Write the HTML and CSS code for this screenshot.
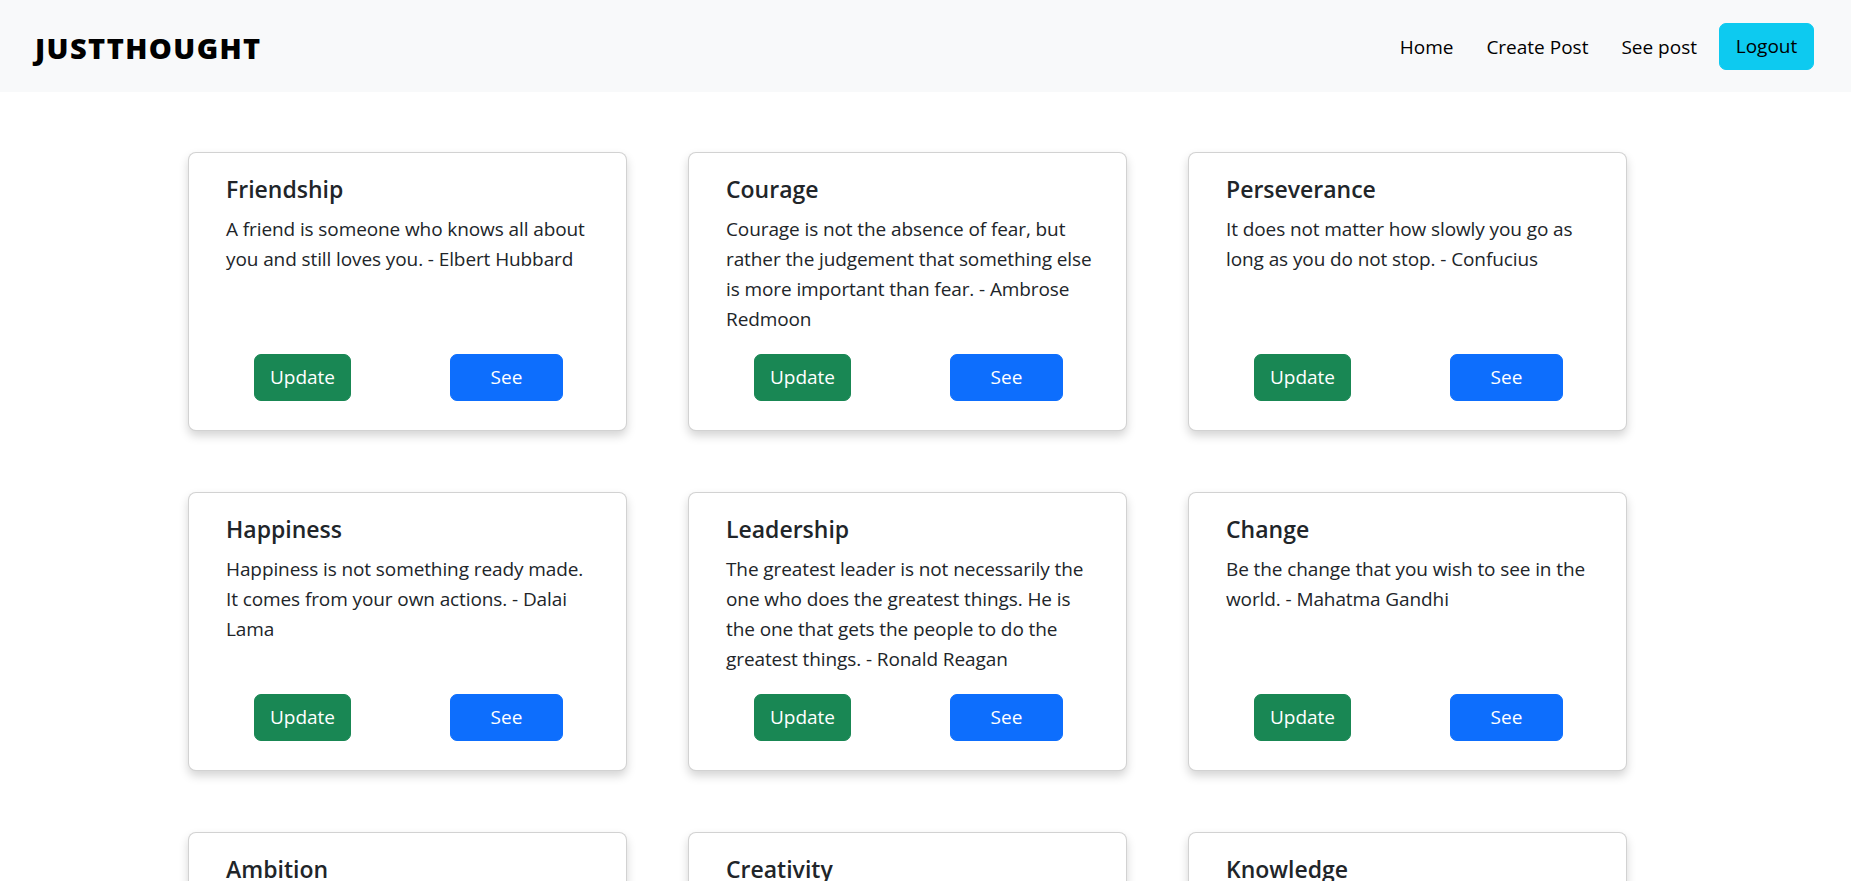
FILE: index.html
```html
<!DOCTYPE html>
<html lang="en">
<head>
<meta charset="utf-8">
<title>JustThought</title>
<link rel="stylesheet" href="styles.css">
</head>
<body>
<nav class="navbar">
  <a class="brand" href="#">JUSTTHOUGHT</a>
  <div class="nav-right">
    <ul class="nav-links">
      <li><a href="#">Home</a></li>
      <li><a href="#">Create Post</a></li>
      <li><a href="#">See post</a></li>
    </ul>
    <button class="btn btn-logout">Logout</button>
  </div>
</nav>

<main class="grid">
  <article class="card">
    <h5 class="card-title">Friendship</h5>
    <p class="card-text">A friend is someone who knows all about you and still loves you. - Elbert Hubbard</p>
    <div class="card-actions"><button class="btn btn-update">Update</button><button class="btn btn-see">See</button></div>
  </article>
  <article class="card">
    <h5 class="card-title">Courage</h5>
    <p class="card-text">Courage is not the absence of fear, but rather the judgement that something else is more important than fear. - Ambrose Redmoon</p>
    <div class="card-actions"><button class="btn btn-update">Update</button><button class="btn btn-see">See</button></div>
  </article>
  <article class="card">
    <h5 class="card-title">Perseverance</h5>
    <p class="card-text">It does not matter how slowly you go as long as you do not stop. - Confucius</p>
    <div class="card-actions"><button class="btn btn-update">Update</button><button class="btn btn-see">See</button></div>
  </article>
  <article class="card">
    <h5 class="card-title">Happiness</h5>
    <p class="card-text">Happiness is not something ready made. It comes from your own actions. - Dalai Lama</p>
    <div class="card-actions"><button class="btn btn-update">Update</button><button class="btn btn-see">See</button></div>
  </article>
  <article class="card">
    <h5 class="card-title">Leadership</h5>
    <p class="card-text">The greatest leader is not necessarily the one who does the greatest things. He is the one that gets the people to do the greatest things. - Ronald Reagan</p>
    <div class="card-actions"><button class="btn btn-update">Update</button><button class="btn btn-see">See</button></div>
  </article>
  <article class="card">
    <h5 class="card-title">Change</h5>
    <p class="card-text">Be the change that you wish to see in the world. - Mahatma Gandhi</p>
    <div class="card-actions"><button class="btn btn-update">Update</button><button class="btn btn-see">See</button></div>
  </article>
  <article class="card">
    <h5 class="card-title">Ambition</h5>
    <p class="card-text">Ambition is the path to success. Persistence is the vehicle you arrive in. - Bill Bradley</p>
    <div class="card-actions"><button class="btn btn-update">Update</button><button class="btn btn-see">See</button></div>
  </article>
  <article class="card">
    <h5 class="card-title">Creativity</h5>
    <p class="card-text">Creativity is intelligence having fun. - Albert Einstein</p>
    <div class="card-actions"><button class="btn btn-update">Update</button><button class="btn btn-see">See</button></div>
  </article>
  <article class="card">
    <h5 class="card-title">Knowledge</h5>
    <p class="card-text">Knowledge is power. - Francis Bacon</p>
    <div class="card-actions"><button class="btn btn-update">Update</button><button class="btn btn-see">See</button></div>
  </article>
</main>
</body>
</html>
```

FILE: styles.css
```css
html {
  scrollbar-width: none;
}
html::-webkit-scrollbar,
body::-webkit-scrollbar {
  display: none;
}
* {
  box-sizing: border-box;
}
body {
  margin: 0;
  background: #fff;
  color: #212529;
  font-family: "Open Sans", "Noto Sans", sans-serif;
  font-size: 19px;
  line-height: 30px;
}

.navbar {
  height: 92px;
  background: #f8f9fa;
  display: flex;
  align-items: center;
  justify-content: space-between;
  padding: 0 37px 0 35px;
}
.brand {
  color: #000;
  text-decoration: none;
  font-size: 29px;
  font-weight: 800;
  letter-spacing: 1.4px;
  line-height: 40px;
  padding-top: 3px;
}
.nav-right {
  display: flex;
  align-items: center;
}
.nav-links {
  display: flex;
  gap: 33px;
  list-style: none;
  margin: 0;
  padding: 2px 0 0;
}
.nav-links a {
  color: #000;
  text-decoration: none;
  font-size: 19px;
}

.btn {
  font-family: inherit;
  font-size: 19px;
  height: 47px;
  line-height: 45px;
  border: 1px solid transparent;
  border-radius: 7px;
  padding: 0;
  text-align: center;
  color: #fff;
  cursor: pointer;
}
.btn-logout {
  width: 95px;
  margin-left: 22px;
  background: #0dcaf0;
  border-color: #0dcaf0;
  color: #000;
}
.btn-update {
  width: 97px;
  background: #198754;
  border-color: #198754;
}
.btn-see {
  width: 113px;
  background: #0d6efd;
  border-color: #0d6efd;
}

.grid {
  display: grid;
  grid-template-columns: repeat(3, 439px);
  column-gap: 61px;
  row-gap: 61px;
  margin: 60px 0 60px 188px;
}
.card {
  display: flex;
  flex-direction: column;
  background: #fff;
  border: 1px solid rgba(0, 0, 0, 0.175);
  border-radius: 8px;
  box-shadow: 0 5px 10px rgba(0, 0, 0, 0.17);
  padding: 21px 28px 29px 37px;
}
.card-title {
  margin: 0 0 10px;
  font-size: 23px;
  font-weight: 600;
  line-height: 30px;
}
.card-text {
  margin: 0 0 20px;
  letter-spacing: -0.1px;
}
.card-actions {
  margin-top: auto;
  display: flex;
  justify-content: space-between;
  padding: 0 35px 0 28px;
}
```
